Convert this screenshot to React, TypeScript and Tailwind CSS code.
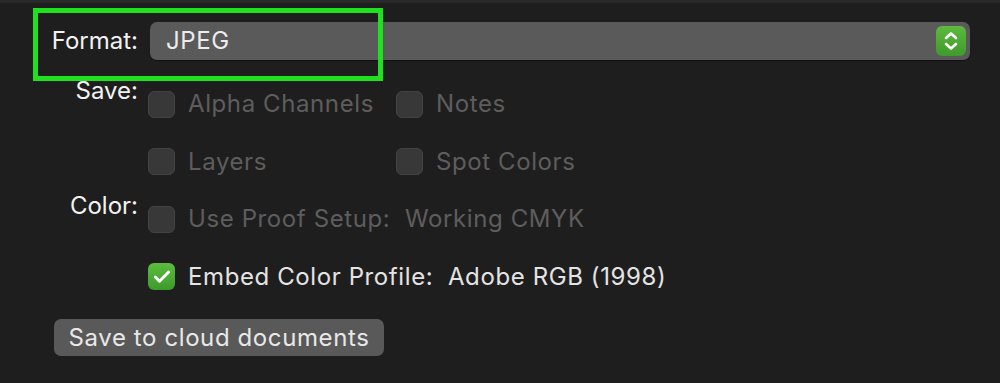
import { Check } from "lucide-react";

function Box({ checked = false }: { checked?: boolean }) {
  if (checked) {
    return (
      <div className="flex h-[27px] w-[27px] shrink-0 items-center justify-center rounded-[6px] bg-gradient-to-b from-[#5cbd3e] to-[#3d9a2b]">
        <Check size={20} strokeWidth={3.5} className="text-white" />
      </div>
    );
  }
  return <div className="h-[27px] w-[27px] shrink-0 rounded-[6px] border border-[#444343] bg-[#393838]" />;
}

function Option({ label, checked = false, wide = false }: { label: string; checked?: boolean; wide?: boolean }) {
  return (
    <div className={`flex items-center gap-[13px] ${wide ? "" : "w-[248px]"}`}>
      <Box checked={checked} />
      <span className={`whitespace-pre ${checked ? "text-[#e4e4e4]" : "text-[#5e5d5d]"}`}>{label}</span>
    </div>
  );
}

function Row({ label, children }: { label?: string; children: React.ReactNode }) {
  return (
    <div className="flex h-[57.5px] items-start">
      <div className="w-[138px] text-right leading-[28px] tracking-[0px] text-[#f2f2f2]">{label}</div>
      <div className="ml-[10px] mt-[9px] flex items-center">{children}</div>
    </div>
  );
}

export default function App() {
  return (
    <div
      className="relative h-[383px] w-[1000px] overflow-hidden bg-[#1f1e1e] text-[24px] tracking-[0.6px]"
      style={{ fontFamily: "Inter, 'Liberation Sans', sans-serif" }}
    >
      <div className="h-[3px] bg-[#2a2929]" />

      {/* Format */}
      <div className="mt-[19px] flex h-[38px] items-center">
        <div className="w-[138px] text-right tracking-[0px] text-[#f2f2f2]">Format:</div>
        <div className="ml-[12px] flex h-[38px] w-[820px] items-center justify-between rounded-[7px] bg-[#5b5a5a] pl-[16px] pr-[4px] shadow-[0_1px_1px_rgba(0,0,0,0.4)]">
          <span className="text-[#ececec]">JPEG</span>
          <div className="flex h-[30px] w-[30px] flex-col items-center justify-center rounded-[6px] bg-gradient-to-b from-[#5dba3e] to-[#3f9b2b]">
            <svg width="16" height="22" viewBox="0 0 16 22" fill="none" stroke="white" strokeWidth="2.6" strokeLinecap="round" strokeLinejoin="round">
              <path d="M3 8 L8 3.5 L13 8" />
              <path d="M3 14 L8 18.5 L13 14" />
            </svg>
          </div>
        </div>
      </div>

      <div className="mt-[17px]">
        <Row label="Save:">
          <Option label="Alpha Channels" />
          <Option label="Notes" />
        </Row>
        <Row>
          <Option label="Layers" />
          <Option label="Spot Colors" />
        </Row>
        <Row label="Color:">
          <Option label="Use Proof Setup:  Working CMYK" wide />
        </Row>
        <Row>
          <Option label="Embed Color Profile:  Adobe RGB (1998)" checked wide />
        </Row>
      </div>

      <div className="ml-[54px] mt-[12px] flex h-[37px] w-[330px] items-center justify-center rounded-[7px] bg-[#5a5959] text-[#e8e8e8]">
        Save to cloud documents
      </div>

      {/* annotation highlight */}
      <div className="absolute left-[33px] top-[8px] h-[73px] w-[350px] border-[5px] border-[#1fe11f]" />
    </div>
  );
}
